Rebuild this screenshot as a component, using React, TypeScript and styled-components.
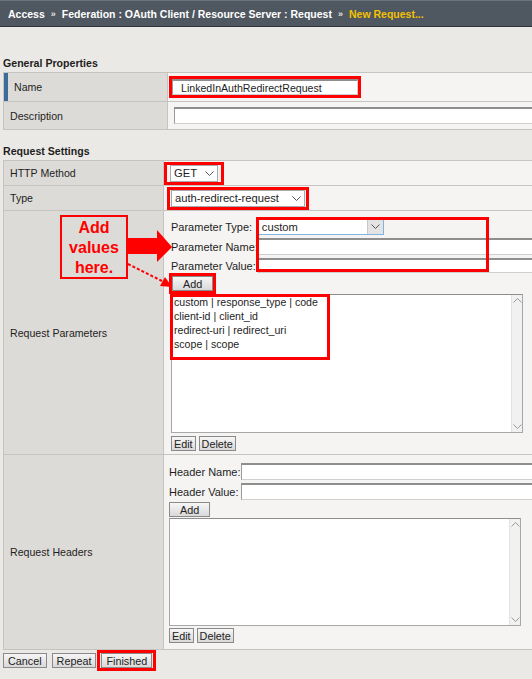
import React from 'react';
import styled, { createGlobalStyle } from 'styled-components';

const GlobalStyle = createGlobalStyle`
  body {
    margin: 0;
    background: #ebe9e5;
    font-family: 'Liberation Sans', Arial, sans-serif;
    font-size: 10.6px;
    color: #1e1e1e;
    overflow: hidden;
  }
`;

const Page = styled.div`
  position: relative;
  width: 532px;
  height: 679px;
  overflow: hidden;
`;

const Breadcrumb = styled.div`
  height: 25px;
  background: #4f5760;
  border-top: 1px solid #6b737c;
  border-bottom: 1px solid #30363c;
  display: flex;
  align-items: center;
  gap: 6px;
  padding-left: 8px;
  color: #fff;
  font-weight: bold;
  font-size: 10.5px;
  white-space: nowrap;
`;

const Sep = styled.span`
  font-size: 9px;
  color: #e0e0e0;
`;

const Current = styled.span`
  color: #f2c200;
`;

type TitleProps = {
  $top: number;
};

const SectionTitle = styled.div<TitleProps>`
  margin-top: ${(p) => p.$top}px;
  height: 16px;
  line-height: 14px;
  padding-left: 3px;
  font-weight: bold;
`;

const Table = styled.div`
  margin-left: 3px;
  width: 560px;
  border-top: 1px solid #c6c4c0;
  border-left: 1px solid #c6c4c0;
`;

type RowProps = {
  $label: number;
  $height?: number;
};

const Row = styled.div<RowProps>`
  display: grid;
  grid-template-columns: ${(p) => p.$label}px 1fr;
  min-height: ${(p) => p.$height || 24}px;
  border-bottom: 1px solid #c6c4c0;
`;

type LabelProps = {
  $accent?: boolean;
};

const LabelCell = styled.div<LabelProps>`
  background: #dddbd7;
  border-right: 1px solid #c6c4c0;
  display: flex;
  align-items: center;
  padding-left: ${(p) => (p.$accent ? 10 : 6)}px;
  box-shadow: ${(p) => (p.$accent ? 'inset 4px 0 #3c6c9c' : 'none')};
`;

type ValueProps = {
  $pad?: string;
  $top?: boolean;
};

const ValueCell = styled.div<ValueProps>`
  background: #f5f4f2;
  display: flex;
  flex-direction: column;
  align-items: flex-start;
  justify-content: ${(p) => (p.$top ? 'flex-start' : 'center')};
  padding: ${(p) => p.$pad || '0'};
`;

type MarkProps = {
  $pad?: string;
  $shift?: number;
};

const Mark = styled.div<MarkProps>`
  border: 3px solid #f00;
  padding: ${(p) => p.$pad || '0'};
  margin-left: ${(p) => p.$shift || 0}px;
  display: inline-flex;
`;

type InputProps = {
  $width: number;
  $height?: number;
};

const TextInput = styled.div<InputProps>`
  width: ${(p) => p.$width}px;
  height: ${(p) => p.$height || 16}px;
  box-sizing: border-box;
  background: #fff;
  border: 1px solid #cfcfcf;
  border-top: 2px solid #8e8e8e;
  border-left: 1px solid #9a9a9a;
  padding-left: 8px;
  display: flex;
  align-items: center;
  white-space: nowrap;
`;

type SelectProps = {
  $width: number;
  $focus?: boolean;
};

const Select = styled.div<SelectProps>`
  width: ${(p) => p.$width}px;
  height: 17px;
  box-sizing: border-box;
  background: #fff;
  border: 1px solid ${(p) => (p.$focus ? '#7fb2e5' : '#a9a9a9')};
  display: flex;
  align-items: center;
  justify-content: space-between;
  padding-left: 3px;
  font-size: 11.2px;
`;

type ArrowBoxProps = {
  $filled?: boolean;
};

const ArrowBox = styled.span<ArrowBoxProps>`
  width: 15px;
  height: 100%;
  display: flex;
  align-items: center;
  justify-content: center;
  background: ${(p) => (p.$filled ? '#e3e3e3' : 'transparent')};
  border-left: ${(p) => (p.$filled ? '1px solid #c9c9c9' : 'none')};
`;

const Button = styled.button`
  font-family: 'Liberation Sans', Arial, sans-serif;
  font-size: 10.8px;
  color: #222;
  height: 15px;
  line-height: 12px;
  padding: 0 2px;
  background: linear-gradient(#f6f6f6, #d9d9d9);
  border: 1px solid #8a8a8a;
  border-radius: 0;
`;

const FooterButton = styled(Button)`
  padding: 0 4px;
`;

const WideButton = styled(Button)`
  padding: 0 10px;
`;

type ButtonRowProps = {
  $top?: number;
};

const ButtonRow = styled.div<ButtonRowProps>`
  display: flex;
  gap: 3px;
  margin-top: ${(p) => (p.$top === undefined ? 3 : p.$top)}px;
`;

const FieldGrid = styled.div`
  position: relative;
  display: grid;
  grid-template-columns: max-content auto;
  row-gap: 3px;
  align-items: center;
`;

const FieldLabel = styled.span`
  white-space: nowrap;
  font-size: 11px;
`;

const GroupMark = styled.div`
  position: absolute;
  left: 85px;
  top: -1px;
  width: 233px;
  height: 55px;
  box-sizing: border-box;
  border: 3px solid #f00;
  pointer-events: none;
`;

type ListProps = {
  $height: number;
};

const ListBox = styled.div<ListProps>`
  position: relative;
  width: 352px;
  height: ${(p) => p.$height}px;
  box-sizing: border-box;
  background: #fff;
  border: 1px solid #a8a8a8;
  border-top-color: #8e8e8e;
  display: flex;
`;

const ListItems = styled.div`
  flex: 1;
  padding: 0 2px;
  font-size: 10.6px;
  line-height: 14px;
`;

const ScrollTrack = styled.div`
  width: 10px;
  background: #f1f1f1;
  border-left: 1px solid #e2e2e2;
  display: flex;
  flex-direction: column;
  justify-content: space-between;
  align-items: center;
  padding: 3px 0;
`;

const ItemsMark = styled.div`
  position: absolute;
  left: -2px;
  top: -1px;
  width: 160px;
  height: 66px;
  box-sizing: border-box;
  border: 3px solid #f00;
  pointer-events: none;
`;

const Footer = styled.div`
  display: flex;
  align-items: center;
  gap: 5px;
  padding: 0 0 0 3px;
`;

const Callout = styled.div`
  position: absolute;
  left: 60px;
  top: 215px;
  width: 68px;
  height: 64px;
  box-sizing: border-box;
  border: 2px solid #f00;
  color: #f00;
  font-weight: bold;
  font-size: 16px;
  line-height: 20px;
  text-align: center;
  padding-top: 1px;
`;

const BigArrow = styled.svg`
  position: absolute;
  left: 128px;
  top: 230px;
`;

const DashArrow = styled.svg`
  position: absolute;
  left: 126px;
  top: 262px;
`;

const Chevron = ({ dir = 'down', color = '#555' }: { dir?: 'up' | 'down'; color?: string }) => (
  <svg width='9' height='5' viewBox='0 0 9 5'>
    <polyline
      points={dir === 'down' ? '0.5,0.5 4.5,4.5 8.5,0.5' : '0.5,4.5 4.5,0.5 8.5,4.5'}
      fill='none'
      stroke={color}
      strokeWidth='1'
    />
  </svg>
);

const params = [
  'custom | response_type | code',
  'client-id | client_id',
  'redirect-uri | redirect_uri',
  'scope | scope',
];

const App = () => {
  return (
    <Page>
      <GlobalStyle />
      <Breadcrumb>
        <span>Access</span>
        <Sep>»</Sep>
        <span>Federation : OAuth Client / Resource Server : Request</span>
        <Sep>»</Sep>
        <Current>New Request...</Current>
      </Breadcrumb>

      <SectionTitle $top={29}>General Properties</SectionTitle>
      <Table>
        <Row $label={164} $height={28}>
          <LabelCell $accent>Name</LabelCell>
          <ValueCell $pad='0 0 0 1px'>
            <Mark>
              <TextInput $width={186}>LinkedInAuthRedirectRequest</TextInput>
            </Mark>
          </ValueCell>
        </Row>
        <Row $label={164} $height={27}>
          <LabelCell>Description</LabelCell>
          <ValueCell $pad='0 0 0 6px'>
            <TextInput $width={380} $height={17} />
          </ValueCell>
        </Row>
      </Table>

      <SectionTitle $top={14}>Request Settings</SectionTitle>
      <Table>
        <Row $label={160} $height={24}>
          <LabelCell>HTTP Method</LabelCell>
          <ValueCell>
            <Mark $pad='0 3px 0 3px'>
              <Select $width={48}>
                GET
                <ArrowBox>
                  <Chevron />
                </ArrowBox>
              </Select>
            </Mark>
          </ValueCell>
        </Row>
        <Row $label={160} $height={24}>
          <LabelCell>Type</LabelCell>
          <ValueCell>
            <Mark $pad='0 1px 0 1px' $shift={3}>
              <Select $width={134}>
                auth-redirect-request
                <ArrowBox>
                  <Chevron />
                </ArrowBox>
              </Select>
            </Mark>
          </ValueCell>
        </Row>
        <Row $label={160} $height={242}>
          <LabelCell>Request Parameters</LabelCell>
          <ValueCell $top $pad='7px 0 3px 7px'>
            <FieldGrid>
              <FieldLabel>Parameter Type:&nbsp;</FieldLabel>
              <Select $width={126} $focus>
                custom
                <ArrowBox $filled>
                  <Chevron />
                </ArrowBox>
              </Select>
              <FieldLabel>Parameter Name:</FieldLabel>
              <TextInput $width={300} $height={17} />
              <FieldLabel>Parameter Value:</FieldLabel>
              <TextInput $width={300} $height={15} />
              <GroupMark />
            </FieldGrid>
            <Mark $shift={-2}>
              <WideButton>Add</WideButton>
            </Mark>
            <ListBox $height={139}>
              <ListItems>
                {params.map((p) => (
                  <div key={p}>{p}</div>
                ))}
              </ListItems>
              <ScrollTrack>
                <Chevron dir='up' color='#999' />
                <Chevron color='#999' />
              </ScrollTrack>
              <ItemsMark />
            </ListBox>
            <ButtonRow>
              <Button>Edit</Button>
              <Button>Delete</Button>
            </ButtonRow>
          </ValueCell>
        </Row>
        <Row $label={160} $height={194}>
          <LabelCell>Request Headers</LabelCell>
          <ValueCell $top $pad='8px 0 3px 5px'>
            <FieldGrid>
              <FieldLabel>Header Name:</FieldLabel>
              <TextInput $width={320} $height={17} />
              <FieldLabel>Header Value:</FieldLabel>
              <TextInput $width={320} $height={17} />
            </FieldGrid>
            <ButtonRow $top={2}>
              <WideButton>Add</WideButton>
            </ButtonRow>
            <ListBox $height={108} style={{ marginTop: 1 }}>
              <ListItems />
              <ScrollTrack>
                <Chevron dir='up' color='#999' />
                <Chevron color='#999' />
              </ScrollTrack>
            </ListBox>
            <ButtonRow $top={2}>
              <Button>Edit</Button>
              <Button>Delete</Button>
            </ButtonRow>
          </ValueCell>
        </Row>
      </Table>

      <Footer>
        <FooterButton>Cancel</FooterButton>
        <FooterButton>Repeat</FooterButton>
        <Mark $pad='0 1px' $shift={-4}>
          <FooterButton>Finished</FooterButton>
        </Mark>
      </Footer>

      <Callout>
        Add
        <br />
        values
        <br />
        here.
      </Callout>
      <BigArrow width='45' height='33' viewBox='0 0 45 33'>
        <polygon points='0,8 29,8 29,0 44,17 29,32 29,24 0,24' fill='#f00' />
      </BigArrow>
      <DashArrow width='48' height='28' viewBox='0 0 48 28'>
        <line x1='2' y1='2' x2='38' y2='20' stroke='#f00' strokeWidth='2' strokeDasharray='3 2' />
        <polygon points='46,25 34,24 39,15' fill='#f00' />
      </DashArrow>
    </Page>
  );
};

export default App;
